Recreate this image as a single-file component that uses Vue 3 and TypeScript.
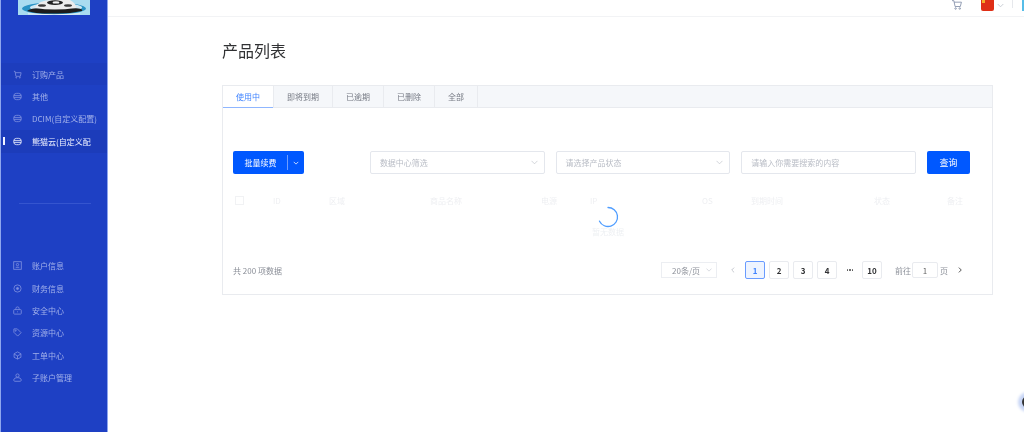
<script setup lang="ts">
interface MenuItem { label: string; icon: string; active?: boolean; tint?: boolean }
const topMenu: MenuItem[] = [
  { label: '订购产品', icon: 'cart', tint: true },
  { label: '其他', icon: 'db' },
  { label: 'DCIM(自定义配置)', icon: 'db' },
  { label: '熊猫云(自定义配', icon: 'db', active: true },
]
const bottomMenu: MenuItem[] = [
  { label: '账户信息', icon: 'user' },
  { label: '财务信息', icon: 'coin' },
  { label: '安全中心', icon: 'lock' },
  { label: '资源中心', icon: 'tag' },
  { label: '工单中心', icon: 'cube' },
  { label: '子账户管理', icon: 'person' },
]
const tabs = ['使用中', '即将到期', '已逾期', '已删除', '全部']
const cols = ['ID', '区域', '商品名称', '电源', 'IP', 'OS', '到期时间', '状态', '备注']
const pages = ['1', '2', '3', '4']
</script>

<template>
  <div class="page">
    <aside class="side">
      <div class="logo">
        <svg width="72" height="15" viewBox="0 0 72 15">
          <rect width="72" height="15" fill="#a9dcf0" />
          <ellipse cx="36" cy="8.500" rx="32" ry="6" fill="#2a93c4" />
          <ellipse cx="38" cy="7.500" rx="26" ry="4.500" fill="#cfe9f4" />
          <path d="M9 11 Q12 8 24 8 H52 Q66 8 64 11 Q50 14 36 13.500 Q18 14 9 11 Z" fill="#1c1c1c" />
          <path d="M17 8 Q20 0 34 0 H52 Q58 3 58 8 Q36 11 17 8 Z" fill="#ececec" />
          <ellipse cx="37" cy="2.600" rx="8" ry="2.400" fill="#202020" />
          <ellipse cx="38" cy="2.400" rx="3.400" ry="1.200" fill="#f2f2f2" />
          <ellipse cx="24" cy="5.500" rx="4" ry="1.300" fill="#3a3a3a" />
          <ellipse cx="50" cy="5.500" rx="4" ry="1.300" fill="#3a3a3a" />
          <path d="M10 13.800 Q36 16 62 13.800" stroke="#eef2f4" stroke-width="1" fill="none" />
        </svg>
      </div>
      <nav class="menu first">
        <a v-for="m in topMenu" :key="m.label" class="item" :class="{ active: m.active, tint: m.tint }">
          <svg class="ic" viewBox="0 0 10 10" fill="none" stroke="currentColor" stroke-width="0.9">
            <template v-if="m.icon === 'cart'">
              <path d="M1 1.500h1.300l.9 5.500h5l.8-4H2.600" />
              <circle cx="3.600" cy="8.600" r=".5" /><circle cx="7.600" cy="8.600" r=".5" />
            </template>
            <template v-else>
              <rect x=".8" y="1.500" width="8.400" height="7" rx="3" />
              <path d="M1 4h8M1 6h8" />
            </template>
          </svg>
          <span>{{ m.label }}</span>
        </a>
      </nav>
      <div class="rule"></div>
      <nav class="menu">
        <a v-for="m in bottomMenu" :key="m.label" class="item">
          <svg class="ic" viewBox="0 0 10 10" fill="none" stroke="currentColor" stroke-width="0.9">
            <template v-if="m.icon === 'user'">
              <rect x=".8" y=".8" width="8.400" height="8.400" />
              <circle cx="5" cy="4" r="1.300" /><path d="M3 7h4" />
            </template>
            <template v-else-if="m.icon === 'coin'">
              <circle cx="5" cy="5" r="4" /><circle cx="5" cy="5" r="1.200" fill="currentColor" />
            </template>
            <template v-else-if="m.icon === 'lock'">
              <rect x=".8" y="4" width="8.400" height="5" rx=".8" />
              <path d="M3.200 4V2.800a1.800 1.800 0 0 1 3.600 0V4M5 6v1" />
            </template>
            <template v-else-if="m.icon === 'tag'">
              <path d="M1 1h3.800l4.200 4.200-3.800 3.800-4.200-4.200z" /><circle cx="3" cy="3" r=".6" />
            </template>
            <template v-else-if="m.icon === 'cube'">
              <path d="M5 1l3.800 2v4L5 9 1.200 7V3zM1.200 3.400 5 5.400l3.800-2M5 5.400V9" />
            </template>
            <template v-else>
              <circle cx="5" cy="2.800" r="1.800" />
              <path d="M.8 8c0-2 1.900-2.800 4.200-2.800S9.200 6 9.200 8c0 .6-.6 1.200-1.200 1.200H2C1.400 9.200.8 8.600.8 8z" />
            </template>
          </svg>
          <span>{{ m.label }}</span>
        </a>
      </nav>
    </aside>

    <div class="main">
      <header class="top">
        <svg class="cart" viewBox="0 0 14 12" fill="none" stroke="#7f8ba6" stroke-width="1">
          <path d="M1 .8h2.200l1.500 7h6.300l1.300-5.200H3.600" />
          <circle cx="5.300" cy="10.200" r=".9" /><circle cx="10.300" cy="10.200" r=".9" />
        </svg>
        <span class="flag"><i></i></span>
        <svg class="caret" viewBox="0 0 8 5" fill="none" stroke="#c4c8d0" stroke-width="1"><path d="M.8.8 4 4 7.200.8" /></svg>
        <span class="vline"></span>
        <span class="avatar"></span>
      </header>

      <section class="content">
        <h1>产品列表</h1>
        <div class="box">
          <div class="tabs">
            <span v-for="(t, i) in tabs" :key="t" class="tab" :class="{ on: i === 0 }">{{ t }}</span>
          </div>
          <div class="body">
            <div class="toolbar">
              <div class="split">
                <span class="split-l">批量续费</span>
                <span class="split-r">
                  <svg viewBox="0 0 8 5" fill="none" stroke="#fff" stroke-width="1"><path d="M1 1l3 3 3-3" /></svg>
                </span>
              </div>
              <div class="field sel first-sel">
                <span>数据中心筛选</span>
                <svg viewBox="0 0 8 5" fill="none" stroke="#c0c4cc" stroke-width=".8"><path d="M.6.6 4 4 7.400.6" /></svg>
              </div>
              <div class="field sel">
                <span>请选择产品状态</span>
                <svg viewBox="0 0 8 5" fill="none" stroke="#c0c4cc" stroke-width=".8"><path d="M.6.6 4 4 7.400.6" /></svg>
              </div>
              <div class="field"><span>请输入你需要搜索的内容</span></div>
              <button class="query" type="button">查询</button>
            </div>

            <div class="table">
              <div class="thead">
                <span class="chk"><i></i></span>
                <span v-for="c in cols" :key="c">{{ c }}</span>
              </div>
              <div class="loading">
                <svg class="spin" viewBox="0 0 22 22" fill="none" stroke="#4f9dff" stroke-width="1.300" stroke-linecap="round">
                  <path d="M11 1.500a9.500 9.500 0 1 1-8.500 13.700" />
                </svg>
                <span>暂无数据</span>
              </div>
            </div>

            <div class="pager">
              <span class="total">共 200 项数据</span>
              <div class="pager-r">
                <div class="size">
                  <span>20条/页</span>
                  <svg viewBox="0 0 8 5" fill="none" stroke="#c0c4cc" stroke-width=".8"><path d="M.6.6 4 4 7.400.6" /></svg>
                </div>
                <svg class="arrow prev" viewBox="0 0 5 8" fill="none" stroke="#b4b8c0" stroke-width="1"><path d="M4 .8.800 4 4 7.200" /></svg>
                <span v-for="(p, i) in pages" :key="p" class="pg" :class="{ cur: i === 0 }">{{ p }}</span>
                <span class="more"><i></i><i></i><i></i></span>
                <span class="pg">10</span>
                <span class="goto">前往</span>
                <span class="jump">1</span>
                <span class="goto">页</span>
                <svg class="arrow next" viewBox="0 0 5 8" fill="none" stroke="#444" stroke-width="1.200"><path d="M1 .8 4.200 4 1 7.200" /></svg>
              </div>
            </div>
          </div>
        </div>
      </section>
    </div>

    <span class="float"></span>
  </div>
</template>

<style>
html, body { margin: 0; background: #fff; overflow: hidden; }
</style>

<style scoped>
.page {
  position: relative;
  display: flex;
  width: 1024px;
  height: 432px;
  overflow: hidden;
  font-family: "Noto Sans CJK SC", "Noto Sans", sans-serif;
  color: #606266;
  background: #fff;
  filter: blur(0.35px);
}
.side {
  box-sizing: border-box;
  width: 108px;
  flex: none;
  background: #1e40c4;
  border-left: 1px solid #8ea6ee;
  border-right: 1px solid #8ea6ee;
  display: flex;
  flex-direction: column;
}
.logo { height: 63px; padding-left: 17px; }
.logo svg { display: block; }
.item {
  box-sizing: border-box;
  height: 22.4px;
  display: flex;
  align-items: center;
  padding-left: 12px;
  font-size: 8px;
  color: #a2b0ea;
  position: relative;
}
.item .ic { width: 9px; height: 9px; margin-right: 10px; flex: none; color: #7f91e0; }
.item.tint { background: #1d3dbd; }
.item.active { background: #1c3cba; color: #eef1ff; }
.item.active .ic { color: #eef1ff; }
.item.active::before {
  content: "";
  position: absolute;
  left: 2px;
  top: 7px;
  width: 2px;
  height: 8px;
  background: #f0f3ff;
}
.rule { height: 1px; margin: 50px 16px 51px 18px; background: #3555cf; }
.main { flex: 1; min-width: 0; }
.top {
  box-sizing: border-box;
  height: 17px;
  border-bottom: 1px solid #f2f3f5;
  display: flex;
  align-items: flex-start;
  justify-content: flex-end;
}
.cart { width: 12px; height: 10px; margin-right: 18px; }
.flag { width: 13px; height: 11px; background: #df2f16; border-radius: 0 0 2px 2px; margin-right: 3px; position: relative; }
.flag i { position: absolute; left: 1px; top: 0; width: 3px; height: 3px; background: #f4b02a; }
.caret { width: 7px; height: 5px; margin: 3px 8px 0 0; }
.vline { width: 1px; height: 8px; background: #e6e8ec; margin-right: 9px; }
.avatar { width: 2px; height: 11px; background: #56bde8; }
.content { padding: 25px 31px 0 114px; }
h1 {
  margin: 0 0 26px;
  font-size: 16px;
  line-height: 17px;
  font-weight: 400;
  color: #303133;
}
.box { width: 771px; border: 1px solid #e9ebef; box-sizing: border-box; }
.tabs {
  display: flex;
  height: 22px;
  box-sizing: border-box;
  background: #f5f7fa;
  border-bottom: 1px solid #e9ebef;
}
.tab {
  font-size: 8px;
  line-height: 21px;
  padding: 0 13px;
  color: #777b85;
  border-right: 1px solid #e9ebef;
}
.tab.on {
  background: #fff;
  color: #3f83ff;
  height: 22px;
  box-shadow: inset 0 -1px 0 #8fb6ff;
}
.body { padding: 43px 22px 15px 10px; }
.toolbar { display: flex; align-items: stretch; height: 23px; }
.split {
  width: 71px;
  display: flex;
  align-items: center;
  background: #0058ff;
  border-radius: 2px;
  color: #fff;
  font-size: 8px;
}
.split-l { box-sizing: border-box; width: 55px; padding-left: 1px; text-align: center; line-height: 15px; border-right: 1px solid #6f9dff; }
.split-r { flex: 1; display: flex; justify-content: center; }
.split-r svg { width: 6px; height: 4px; }
.field {
  box-sizing: border-box;
  width: 175px;
  margin-left: 11px;
  padding: 0 6px 0 9px;
  border: 1px solid #e4e7ed;
  border-radius: 2px;
  display: flex;
  align-items: center;
  justify-content: space-between;
  font-size: 8px;
  color: #b8bcc5;
}
.field svg { width: 7px; height: 5px; }
.first-sel { margin-left: 66px; }
.query {
  width: 43px;
  margin-left: 11px;
  padding: 0;
  border: 0;
  border-radius: 2px;
  background: #0058ff;
  color: #fff;
  font: 9px "Noto Sans CJK SC", sans-serif;
}
.table { position: relative; height: 68px; margin-top: 19px; }
.thead {
  display: grid;
  grid-template-columns: 40px 56px 101px 111px 49px 112px 49px 123px 73px 1fr;
  height: 14px;
  align-items: center;
  font-size: 8px;
  color: #eeeff2;
}
.chk { display: flex; padding-left: 2px; }
.chk i { width: 7px; height: 7px; border: 1px solid #f1f2f4; }
.loading {
  position: absolute;
  left: 355px;
  top: 13px;
  width: 40px;
  display: flex;
  flex-direction: column;
  align-items: center;
  font-size: 8px;
  color: #eef0f3;
}
.spin { width: 22px; height: 22px; }
.loading span { line-height: 12px; margin-top: -2px; white-space: nowrap; }
.pager { display: flex; align-items: center; justify-content: space-between; height: 18px; }
.total { font-size: 8px; color: #8a8e97; }
.pager-r { display: flex; align-items: center; font-size: 8px; margin-right: 8px; }
.size {
  box-sizing: border-box;
  width: 56px;
  height: 16px;
  border: 1px solid #eceef2;
  display: flex;
  align-items: center;
  justify-content: space-between;
  padding: 0 4px 0 10px;
  color: #8d919a;
}
.size svg { width: 6px; height: 4px; }
.arrow { width: 4px; height: 6px; }
.prev { margin: 0 10px 0 14px; }
.pg {
  box-sizing: border-box;
  width: 20px;
  height: 18px;
  margin-right: 4px;
  display: flex;
  align-items: center;
  justify-content: center;
  border: 1px solid #e9ebef;
  border-radius: 2px;
  font-weight: 700;
  color: #303133;
}
.pg.cur { background: #eef4ff; border-color: #6a9cff; color: #3f83ff; }
.more { box-sizing: border-box; width: 20px; padding-right: 4px; display: flex; justify-content: center; gap: 1px; margin-left: 1px; }
.more i { width: 1.500px; height: 1.500px; background: #555; border-radius: 50%; }
.goto { color: #8d919a; margin-left: 9px; margin-right: 1px; }
.jump + .goto { margin-left: 2px; }
.jump {
  box-sizing: border-box;
  width: 26px;
  height: 16px;
  border: 1px solid #e9ebef;
  border-radius: 2px;
  display: flex;
  align-items: center;
  justify-content: center;
  color: #666;
}
.next { margin-left: 9px; }
.float {
  position: absolute;
  left: 1022px;
  top: 396px;
  width: 12px;
  height: 12px;
  border-radius: 50%;
  background: #333;
  box-shadow: 0 0 3px 4px #c6d4f5;
}
</style>
